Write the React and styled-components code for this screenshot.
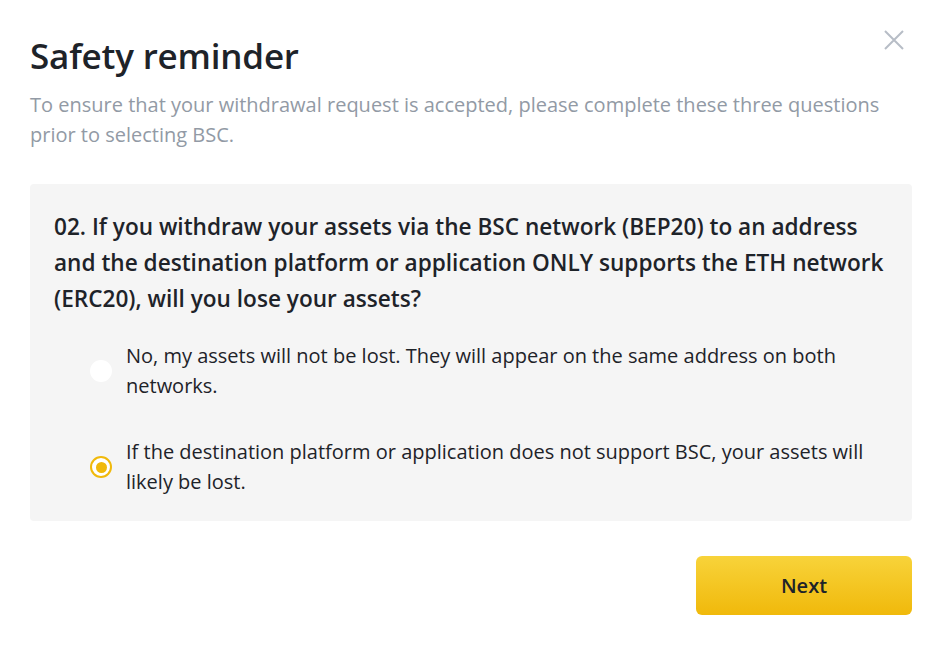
import React, { useState } from 'react'
import styled, { createGlobalStyle } from 'styled-components'

const GlobalStyle = createGlobalStyle`
  html, body {
    margin: 0;
    padding: 0;
    background: #ffffff;
    font-family: "Open Sans", "Noto Sans", sans-serif;
    color: #1e2329;
  }
`

const Modal = styled.div`
  box-sizing: border-box;
  width: 946px;
  height: 651px;
  padding: 30px 34px 36px 30px;
  display: flex;
  flex-direction: column;
`

const Header = styled.div`
  display: flex;
  justify-content: space-between;
  align-items: flex-start;
`

const Title = styled.h1`
  margin: 4px 0 0;
  font-size: 35px;
  line-height: 44px;
  font-weight: 600;
  letter-spacing: -0.2px;
`

const CloseBtn = styled.button`
  border: none;
  background: none;
  padding: 0;
  margin: -2px 6px 0 0;
  width: 24px;
  height: 24px;
  cursor: pointer;
  color: #b7bdc6;
`

const Subtitle = styled.p`
  margin: 12px 0 0;
  font-size: 20px;
  line-height: 30px;
  color: #929aa5;
`

const QuestionBox = styled.div`
  margin-top: 34px;
  background: #f5f5f5;
  border-radius: 4px;
  padding: 25px 24px 24px;
`

const Question = styled.div`
  font-size: 22.6px;
  line-height: 36px;
  font-weight: 600;
`

const Options = styled.div`
  margin-top: 24px;
  display: flex;
  flex-direction: column;
  gap: 36px;
  padding-left: 36px;
`

const Option = styled.label`
  display: flex;
  align-items: center;
  gap: 14px;
  cursor: pointer;
`

const Radio = styled.span`
  flex: none;
  box-sizing: border-box;
  width: 22px;
  height: 22px;
  border-radius: 50%;
  background: #ffffff;
  border: ${p => (p.$checked ? '2px solid #f0b90b' : 'none')};
  display: flex;
  align-items: center;
  justify-content: center;
  &::after {
    content: '';
    display: ${p => (p.$checked ? 'block' : 'none')};
    width: 11px;
    height: 11px;
    border-radius: 50%;
    background: #f0b90b;
  }
`

const OptionText = styled.span`
  font-size: 20px;
  line-height: 30px;
  color: #1e2329;
`

const Footer = styled.div`
  margin-top: auto;
  display: flex;
  justify-content: flex-end;
`

const NextButton = styled.button`
  width: 216px;
  height: 59px;
  border: none;
  border-radius: 6px;
  background: linear-gradient(180deg, #f8d33a 0%, #f0b90b 100%);
  color: #1e2329;
  font-family: inherit;
  font-size: 20px;
  font-weight: 600;
  cursor: pointer;
`

const options = [
  'No, my assets will not be lost. They will appear on the same address on both networks.',
  'If the destination platform or application does not support BSC, your assets will likely be lost.',
]

export default function App() {
  const [picked, setPicked] = useState(1)
  return (
    <>
      <GlobalStyle />
      <Modal>
        <Header>
          <Title>Safety reminder</Title>
          <CloseBtn aria-label="close">
            <svg width="24" height="24" viewBox="0 0 24 24" fill="none" stroke="currentColor" strokeWidth="2">
              <path d="M3 3l18 18M21 3L3 21" />
            </svg>
          </CloseBtn>
        </Header>
        <Subtitle>
          To ensure that your withdrawal request is accepted, please complete these three questions prior to selecting BSC.
        </Subtitle>
        <QuestionBox>
          <Question>
            02. If you withdraw your assets via the BSC network (BEP20) to an address and the destination platform or application ONLY supports the ETH network (ERC20), will you lose your assets?
          </Question>
          <Options>
            {options.map((text, i) => (
              <Option key={i} onClick={() => setPicked(i)}>
                <Radio $checked={picked === i} />
                <OptionText>{text}</OptionText>
              </Option>
            ))}
          </Options>
        </QuestionBox>
        <Footer>
          <NextButton>Next</NextButton>
        </Footer>
      </Modal>
    </>
  )
}
